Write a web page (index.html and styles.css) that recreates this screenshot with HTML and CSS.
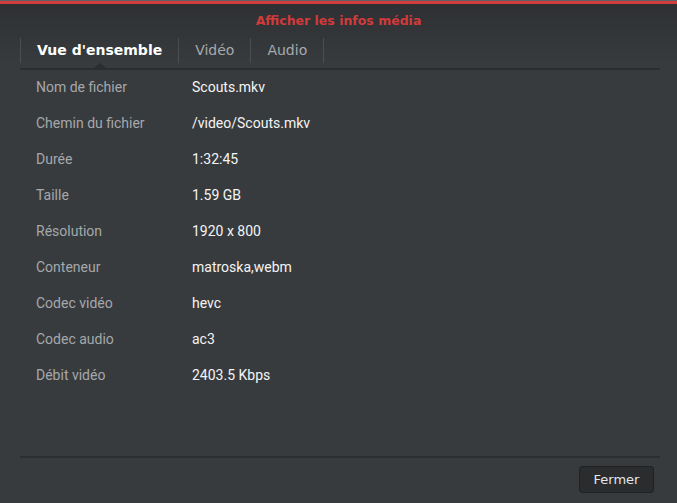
FILE: index.html
```html
<!DOCTYPE html>
<html lang="fr">
  <head>
    <meta charset="UTF-8" />
    <meta name="viewport" content="width=device-width, initial-scale=1.0" />
    <title>Afficher les infos média</title>
    <link rel="stylesheet" href="styles.css">
  </head>
  <body>
    <div class="top-strip"></div>
    <div class="red-bar"></div>

    <div class="dialog">
      <div class="dialog-head">
        <div class="dialog-title">Afficher les infos média</div>
        <div class="tabs">
          <div class="tab active">Vue d'ensemble</div>
          <div class="tab">Vidéo</div>
          <div class="tab">Audio</div>
        </div>
      </div>

      <div class="tab-line"></div>

      <div class="info">
        <div class="row"><span class="label">Nom de fichier</span><span class="value">Scouts.mkv</span></div>
        <div class="row"><span class="label">Chemin du fichier</span><span class="value">/video/Scouts.mkv</span></div>
        <div class="row"><span class="label">Durée</span><span class="value">1:32:45</span></div>
        <div class="row"><span class="label">Taille</span><span class="value">1.59 GB</span></div>
        <div class="row"><span class="label">Résolution</span><span class="value">1920 x 800</span></div>
        <div class="row"><span class="label">Conteneur</span><span class="value">matroska,webm</span></div>
        <div class="row"><span class="label">Codec vidéo</span><span class="value">hevc</span></div>
        <div class="row"><span class="label">Codec audio</span><span class="value">ac3</span></div>
        <div class="row"><span class="label">Débit vidéo</span><span class="value">2403.5 Kbps</span></div>
      </div>

      <div class="dialog-foot">
        <button class="btn">Fermer</button>
      </div>
    </div>
  </body>
</html>
```

FILE: styles.css
```css
html,
body {
  margin: 0;
  padding: 0;
  height: 100%;
  overflow: hidden;
}
body {
  background-color: #383b3e;
  font-family: "DejaVu Sans", sans-serif;
}
.top-strip {
  height: 1px;
  background-color: #5e6266;
}
.red-bar {
  height: 3px;
  background-color: #d23c3c;
}
.dialog {
  display: flex;
  flex-direction: column;
  height: calc(100% - 4px);
}
.dialog-head {
  background: linear-gradient(#2e3033, #383b3e 60px);
  padding-top: 8px;
}
.dialog-title {
  text-align: center;
  color: #d33a3a;
  font-size: 12.5px;
  font-weight: bold;
  height: 17px;
  line-height: 17px;
}
.tabs {
  display: flex;
  margin: 9px 0 0 20px;
  border-left: 1px solid #4a4d51;
}
.tab {
  padding: 0 16px;
  height: 25px;
  line-height: 25px;
  font-size: 14px;
  color: #a7aaad;
  border-right: 1px solid #4a4d51;
}
.tab.active {
  color: #ffffff;
  font-weight: bold;
  font-size: 14px;
  position: relative;
}
.tab.active::after {
  content: "";
  position: absolute;
  left: 50%;
  bottom: -5px;
  margin-left: -6px;
  border-left: 6px solid transparent;
  border-right: 6px solid transparent;
  border-bottom: 5px solid #2b2d30;
}
.tab-line {
  margin: 5px 17px 0 20px;
  height: 2px;
  background-color: #2b2d30;
}
.info {
  flex: 1;
  margin-top: -1px;
  padding-left: 36px;
  font-family: Roboto, sans-serif;
  font-size: 14px;
}
.row {
  display: flex;
  height: 36px;
  line-height: 36px;
}
.label {
  width: 156px;
  color: #a5a8ab;
}
.value {
  color: #f4f4f4;
}
.dialog-foot {
  margin: 0 17px 0 20px;
  border-top: 2px solid #2c2e30;
  padding: 8px 6px 10px 0;
  display: flex;
  justify-content: flex-end;
}
.btn {
  width: 75px;
  height: 27px;
  background-color: #2a2c2e;
  border: 1px solid #1f2123;
  border-radius: 3px;
  color: #e6e6e6;
  font-family: "DejaVu Sans", sans-serif;
  font-size: 13px;
  padding: 0;
}
```
